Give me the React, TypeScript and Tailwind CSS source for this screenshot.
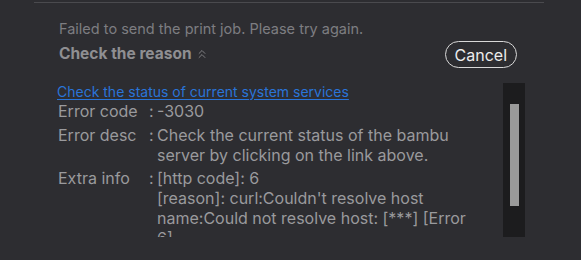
import { ChevronsUp } from 'lucide-react'

const font = { fontFamily: 'Inter, "Noto Sans", sans-serif' }

function Row({ label, children }: { label: string; children: React.ReactNode }) {
  return (
    <div className="flex">
      <span className="w-[91px] shrink-0">{label}</span>
      <span className="w-[8px] shrink-0">:</span>
      <span className="flex-1">{children}</span>
    </div>
  )
}

export default function App() {
  return (
    <div
      className="relative h-[260px] w-[581px] overflow-hidden bg-[#2d2d31] text-[16px] leading-[20px]"
      style={font}
    >
      <div className="ml-[34px] mt-[2px] h-px w-[510px] bg-[#4a4a4e]" />

      {/* header */}
      <div className="pl-[59px] pr-[64px] pt-[15px]">
        <p className="text-[14.5px] leading-[22px] text-[#7d7d81]">
          Failed to send the print job. Please try again.
        </p>
        <div className="flex items-center justify-between">
          <span className="flex items-center gap-[3px] text-[15.5px] font-bold text-[#8f8f92]">
            Check the reason
            <ChevronsUp className="size-[14px] text-[#8a8a8d]" strokeWidth={1.5} />
          </span>
          <button className="mt-[1px] h-[27px] rounded-full border border-[#d8d8d8] px-[9px] text-[16px] leading-[24px] text-[#ececec]">
            Cancel
          </button>
        </div>
      </div>

      {/* details */}
      <div className="ml-[57px] mr-[56px] mt-[15px] flex h-[154px]">
        <div className="flex-1 overflow-hidden pr-[28px] text-[#9a9a9d]">
          <a className="block text-[14px] leading-[17px] text-[#2a74d8] underline underline-offset-[2px]">
            Check the status of current system services
          </a>
          <div className="mt-[1px] pl-[1px]">
            <Row label="Error code">-3030</Row>
            <div className="h-[4px]" />
            <Row label="Error desc">
              Check the current status of the bambu server by clicking on the link above.
            </Row>
            <div className="h-[3px]" />
            <Row label="Extra info">
              [http code]: 6
              <br />
              [reason]: curl:Couldn't resolve host name:Could not resolve host: [***] [Error 6]
            </Row>
          </div>
        </div>
        <div className="flex w-[22px] shrink-0 justify-center bg-[#1c1c1e] pt-[21px]">
          <div className="h-[102px] w-[9px] bg-[#9a9a9a]" />
        </div>
      </div>
    </div>
  )
}
